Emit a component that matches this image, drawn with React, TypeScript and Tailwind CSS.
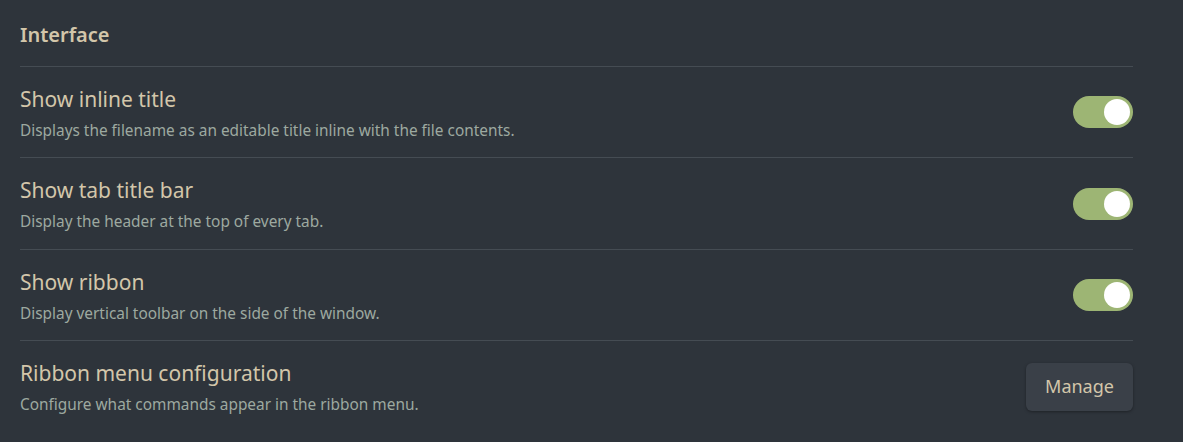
import React from "react";

function Toggle() {
  return (
    <div className="w-[60px] h-[32px] rounded-full bg-[#9db574] flex items-center justify-end pr-[3px]">
      <div className="w-[26px] h-[26px] rounded-full bg-white" />
    </div>
  );
}

function Row({ title, desc, control, last, h }: { title: string; desc: string; control: React.ReactNode; last?: boolean; h: string }) {
  return (
    <div className={`flex items-center justify-between ${h} ${last ? "" : "border-b border-[#454c53]"}`}>
      <div className="flex flex-col gap-[9px] pt-[2px]">
        <div className="text-[21px] leading-[26px] text-[#d3c6aa]">{title}</div>
        <div className="text-[15.4px] leading-[20px] text-[#9da9a0]">{desc}</div>
      </div>
      {control}
    </div>
  );
}

export default function App() {
  return (
    <div
      className="w-[1183px] h-[442px] bg-[#2e343b] pl-[20px] pr-[50px]"
      style={{ fontFamily: '"Noto Sans", "Open Sans", sans-serif' }}
    >
      <div className="h-[67px] flex items-center border-b border-[#454c53] pt-[3px]">
        <div className="text-[20px] font-semibold text-[#d3c6aa]">Interface</div>
      </div>
      <Row h="h-[91px]" title="Show inline title" desc="Displays the filename as an editable title inline with the file contents." control={<Toggle />} />
      <Row h="h-[92px]" title="Show tab title bar" desc="Display the header at the top of every tab." control={<Toggle />} />
      <Row h="h-[91px]" title="Show ribbon" desc="Display vertical toolbar on the side of the window." control={<Toggle />} />
      <Row
        h="h-[91px]"
        title="Ribbon menu configuration"
        desc="Configure what commands appear in the ribbon menu."
        last
        control={
          <button className="w-[107px] h-[48px] rounded-[6px] bg-[#3a4048] text-[#d3c6aa] text-[18px] shadow-[0_1px_3px_rgba(0,0,0,0.35)]">
            Manage
          </button>
        }
      />
    </div>
  );
}
